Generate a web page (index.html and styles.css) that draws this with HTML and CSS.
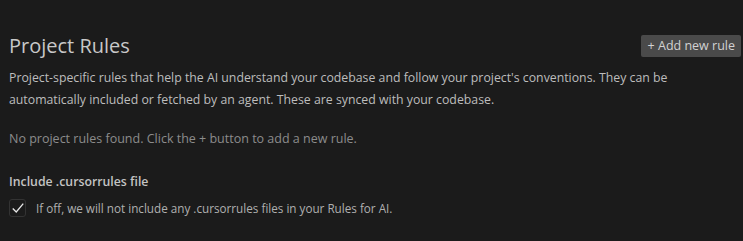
FILE: index.html
```html
<!DOCTYPE html>
<html lang="en">

<head>
    <meta charset="UTF-8">
    <title>Project Rules</title>
    <link rel="stylesheet" href="styles.css">
</head>

<body>
    <div class="panel">
        <div class="header">
            <h1>Project Rules</h1>
            <div class="add-btn">+ Add new rule</div>
        </div>
        <p class="desc">Project-specific rules that help the AI understand your codebase and follow your project's conventions. They can be automatically included or fetched by an agent. These are synced with your codebase.</p>
        <p class="empty">No project rules found. Click the + button to add a new rule.</p>
        <div class="setting">
            <div class="setting-title">Include .cursorrules file</div>
            <label class="check-row">
                <span class="checkbox">
                    <svg width="14" height="14" viewBox="0 0 16 16">
                        <path d="M2 8.5 L6 12.5 L14 3" fill="none" stroke="#e8e8e8" stroke-width="1.5" />
                    </svg>
                </span>
                <span>If off, we will not include any .cursorrules files in your Rules for AI.</span>
            </label>
        </div>
    </div>
</body>

</html>
```

FILE: styles.css
```css
body {
    margin: 0;
    background: #1b1b1b;
    font-family: "Open Sans", "Noto Sans", sans-serif;
    color: #c4c4c4;
}

.panel {
    padding: 32px 2px 0 9px;
}

.header {
    display: flex;
    justify-content: space-between;
    align-items: center;
}

h1 {
    margin: 0;
    font-size: 20px;
    font-weight: 400;
    color: #c8c8c8;
}

.add-btn {
    background: #4a4a4a;
    color: #d2d2d2;
    font-size: 12.5px;
    height: 22px;
    line-height: 22px;
    padding: 0 6px 0 7px;
    border-radius: 2px;
}

.desc {
    margin: 8px 0 0;
    font-size: 12.3px;
    line-height: 22px;
    color: #bdbdbd;
}

.empty {
    margin: 19px 0 0;
    font-size: 12.5px;
    color: #8c8c8c;
}

.setting {
    margin-top: 26px;
}

.setting-title {
    font-size: 12.3px;
    font-weight: 600;
    color: #c4c4c4;
}

.check-row {
    display: flex;
    align-items: center;
    gap: 10px;
    margin-top: 9px;
    font-size: 11.7px;
    color: #b0b0b0;
}

.checkbox {
    width: 15px;
    height: 16px;
    border: 1px solid #333;
    border-radius: 3px;
    display: flex;
    align-items: center;
    justify-content: center;
}
```
